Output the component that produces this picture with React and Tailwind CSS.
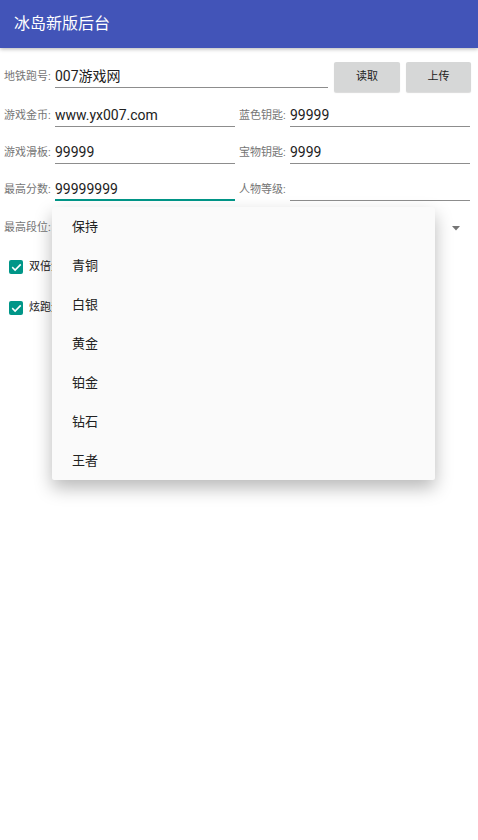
import React from 'react';

const font = { fontFamily: 'Roboto, "Noto Sans CJK SC", sans-serif' };

function Field({ label, value, active, className = '' }) {
    return (
        <div className={`flex items-end ${className}`}>
            <span className="text-[11px] leading-[22px] text-[#757575] w-[51px] shrink-0 whitespace-nowrap">{label}</span>
            <div
                className={`flex-1 h-[23px] leading-[23px] text-[14px] text-[#212121] whitespace-nowrap overflow-hidden ${active ? 'border-b-2 border-[#009688]' : 'border-b border-[#8d8d8d]'}`}
            >
                {value}
            </div>
        </div>
    );
}

function Check({ label, className = '' }) {
    return (
        <div className={`flex items-center h-[32px] pl-[5px] ${className}`}>
            <div className="w-[14px] h-[14px] rounded-[2px] bg-[#009688] flex items-center justify-center">
                <svg width="11" height="11" viewBox="0 0 24 24" fill="none" stroke="white" strokeWidth="3.5" strokeLinecap="square">
                    <path d="M4 12.5l5 5L20 6.5" />
                </svg>
            </div>
            <span className="ml-[6px] text-[11px] text-[#212121]">{label}</span>
        </div>
    );
}

const levels = ['保持', '青铜', '白银', '黄金', '铂金', '钻石', '王者'];

export default function App() {
    return (
        <div className="relative w-[478px] h-[840px] bg-white overflow-hidden" style={font}>
            {/* Toolbar */}
            <header className="h-[48px] bg-[#4254b8] flex items-center px-[14px] shadow-[0_1px_4px_rgba(0,0,0,0.3)] relative z-10">
                <span className="text-white text-[16px]">冰岛新版后台</span>
            </header>

            <main className="pl-[4px] pr-[8px]">
                {/* Row 1 */}
                <div className="mt-[14px] -mr-[1px] flex h-[30px]">
                    <Field label="地铁跑号:" value="007游戏网" className="flex-1 h-[26px]" />
                    <button className="ml-[6px] w-[66px] h-[30px] bg-[#d6d7d7] rounded-[2px] text-[11px] text-[#212121] shadow-[0_1px_1px_rgba(0,0,0,0.15)]">读取</button>
                    <button className="ml-[6px] w-[65px] h-[30px] bg-[#d6d7d7] rounded-[2px] text-[11px] text-[#212121] shadow-[0_1px_1px_rgba(0,0,0,0.15)]">上传</button>
                </div>

                <div className="grid grid-cols-2 gap-x-[4px] h-[35px] items-end">
                    <Field label="游戏金币:" value="www.yx007.com" />
                    <Field label="蓝色钥匙:" value="99999" />
                </div>
                <div className="grid grid-cols-2 gap-x-[4px] h-[37px] items-end">
                    <Field label="游戏滑板:" value="99999" />
                    <Field label="宝物钥匙:" value="9999" />
                </div>
                <div className="grid grid-cols-2 gap-x-[4px] h-[37px] items-end">
                    <Field label="最高分数:" value="99999999" active />
                    <Field label="人物等级:" value="" />
                </div>

                {/* Spinner */}
                <div className="mt-[16px] h-[22px] flex items-center">
                    <span className="text-[11px] text-[#757575]">最高段位:</span>
                    <div className="flex-1" />
                    <svg width="8" height="5" viewBox="0 0 8 5" className="mr-[10px]">
                        <path d="M0 0h8L4 4.5z" fill="#757575" />
                    </svg>
                </div>

                <Check label="双倍金币" className="mt-[12px]" />
                <Check label="炫跑无限" className="mt-[9px]" />
            </main>

            {/* Dropdown popup */}
            <div className="absolute left-[52px] top-[207px] w-[383px] bg-[#fafafa] shadow-[0_8px_18px_rgba(0,0,0,0.28)] rounded-[2px] z-20">
                {levels.map((l) => (
                    <div key={l} className="h-[39px] flex items-center pl-[20px] text-[13px] text-[#212121]">
                        {l}
                    </div>
                ))}
            </div>
        </div>
    );
}
